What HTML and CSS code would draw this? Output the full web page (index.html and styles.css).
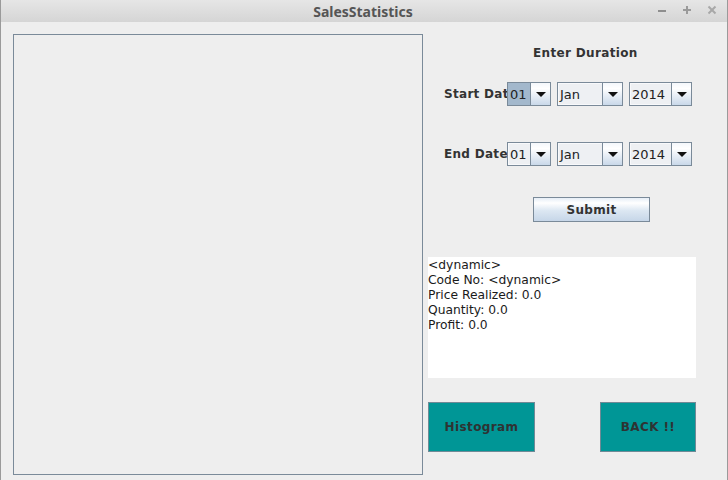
FILE: index.html
```html
<!DOCTYPE html>
<html>
<head>
<meta charset="utf-8">
<link rel="stylesheet" href="styles.css">
</head>
<body>
<div class="window">
  <div class="titlebar">
    <span class="title">SalesStatistics</span>
    <div class="wm-buttons">
      <svg class="wm" width="12" height="12" viewBox="0 0 12 12"><line x1="2" y1="7" x2="10" y2="7" stroke="#8e8e8e" stroke-width="2"/></svg>
      <svg class="wm" width="12" height="12" viewBox="0 0 12 12"><line x1="2" y1="6" x2="10" y2="6" stroke="#9a9a9a" stroke-width="2"/><line x1="6" y1="2" x2="6" y2="10" stroke="#9a9a9a" stroke-width="2"/></svg>
      <svg class="wm" width="12" height="12" viewBox="0 0 12 12"><line x1="2.5" y1="2.5" x2="9.5" y2="9.5" stroke="#a8a8a8" stroke-width="2"/><line x1="9.5" y1="2.5" x2="2.5" y2="9.5" stroke="#a8a8a8" stroke-width="2"/></svg>
    </div>
  </div>
  <div class="content">
    <div class="chart-panel"></div>
    <div class="side">
      <div class="heading">Enter Duration</div>
      <div class="date-row first">
        <span class="label">Start Date</span>
        <div class="combo c-day"><span class="field selected">01</span><span class="arrow"></span></div>
        <div class="combo c-month"><span class="field">Jan</span><span class="arrow"></span></div>
        <div class="combo c-year"><span class="field">2014</span><span class="arrow"></span></div>
      </div>
      <div class="date-row second">
        <span class="label">End Date</span>
        <div class="combo c-day"><span class="field">01</span><span class="arrow"></span></div>
        <div class="combo c-month"><span class="field">Jan</span><span class="arrow"></span></div>
        <div class="combo c-year"><span class="field">2014</span><span class="arrow"></span></div>
      </div>
      <div class="submit">Submit</div>
      <div class="info">
        <div>&lt;dynamic&gt;</div>
        <div>Code No: &lt;dynamic&gt;</div>
        <div>Price Realized: 0.0</div>
        <div>Quantity: 0.0</div>
        <div>Profit: 0.0</div>
      </div>
      <div class="actions">
        <div class="teal-btn histogram">Histogram</div>
        <div class="teal-btn back">BACK !!</div>
      </div>
    </div>
  </div>
</div>
</body>
</html>
```

FILE: styles.css
```css
* { box-sizing: border-box; }
html, body { margin: 0; padding: 0; }
body {
  width: 728px;
  height: 480px;
  overflow: hidden;
  background: #eeeeee;
  font-family: "DejaVu Sans", sans-serif;
  font-size: 12px;
  color: #333333;
}
.window {
  width: 728px;
  height: 480px;
  border-left: 1px solid #9a9a9a;
  border-right: 1px solid #9a9a9a;
  background: #eeeeee;
}
.titlebar {
  height: 22px;
  background: linear-gradient(#e6e6e6, #d5d5d5);
  display: flex;
  align-items: center;
  justify-content: center;
  position: relative;
}
.title {
  font-family: "Noto Sans", sans-serif;
  font-weight: bold;
  font-size: 14px;
  color: #555555;
  margin-left: -2px;
}
.wm-buttons {
  position: absolute;
  right: 9px;
  top: 4px;
  display: flex;
  gap: 13px;
}
.wm { display: block; }
.content {
  display: flex;
  padding: 12px 0 0 12px;
}
.chart-panel {
  width: 410px;
  height: 441px;
  border: 1px solid #7a8a99;
}
.side {
  display: flex;
  flex-direction: column;
  align-items: flex-start;
  flex: 1;
}
.heading {
  font-weight: bold;
  font-size: 12px;
  letter-spacing: 0.35px;
  line-height: 15px;
  margin: 12px 0 0 110px;
}
.date-row {
  display: flex;
  align-items: center;
  height: 24px;
  margin-left: 21px;
}
.date-row.first { margin-top: 21px; }
.date-row.second { margin-top: 36px; }
.label {
  width: 63px;
  overflow: hidden;
  white-space: nowrap;
  font-weight: bold;
  letter-spacing: 0.3px;
}
.combo {
  display: flex;
  height: 24px;
  border: 1px solid #7a8a99;
  margin-right: 6px;
  background: #eef0f3;
}
.c-day { width: 44px; }
.c-month { width: 66px; }
.c-year { width: 63px; }
.field {
  flex: 1;
  display: flex;
  align-items: center;
  padding-left: 1px;
  font-size: 13px;
  color: #222;
  border: 1px solid #f8f9fb;
  border-right: none;
}
.field.selected {
  background: #a3b8cc;
  border-color: #a3b8cc;
}
.arrow {
  width: 20px;
  border-left: 1px solid #7a8a99;
  background: linear-gradient(#f4f7fb, #ffffff 25%, #c9d8e9);
  position: relative;
}
.arrow::after {
  content: "";
  position: absolute;
  left: 4.5px;
  top: 9px;
  border-left: 5px solid transparent;
  border-right: 5px solid transparent;
  border-top: 5px solid #111;
}
.submit {
  margin: 31px 0 0 110px;
  width: 117px;
  height: 25px;
  border: 1px solid #7a8a99;
  background: linear-gradient(#e6eef7, #ffffff 22%, #dce7f2 55%, #c6d6e8);
  display: flex;
  align-items: center;
  justify-content: center;
  font-weight: bold;
  letter-spacing: 0.3px;
}
.info {
  margin: 35px 0 0 5px;
  width: 268px;
  height: 121px;
  background: #ffffff;
  padding-top: 1px;
  font-size: 12.3px;
  line-height: 15px;
  color: #1a1a1a;
}
.actions {
  display: flex;
  gap: 65px;
  margin: 24px 0 0 5px;
}
.teal-btn {
  height: 50px;
  background: #009696;
  border: 1px solid #6f8a96;
  display: flex;
  align-items: center;
  justify-content: center;
  font-weight: bold;
  letter-spacing: 0.4px;
  color: #2e3333;
}
.histogram { width: 107px; }
.back { width: 96px; }
```
